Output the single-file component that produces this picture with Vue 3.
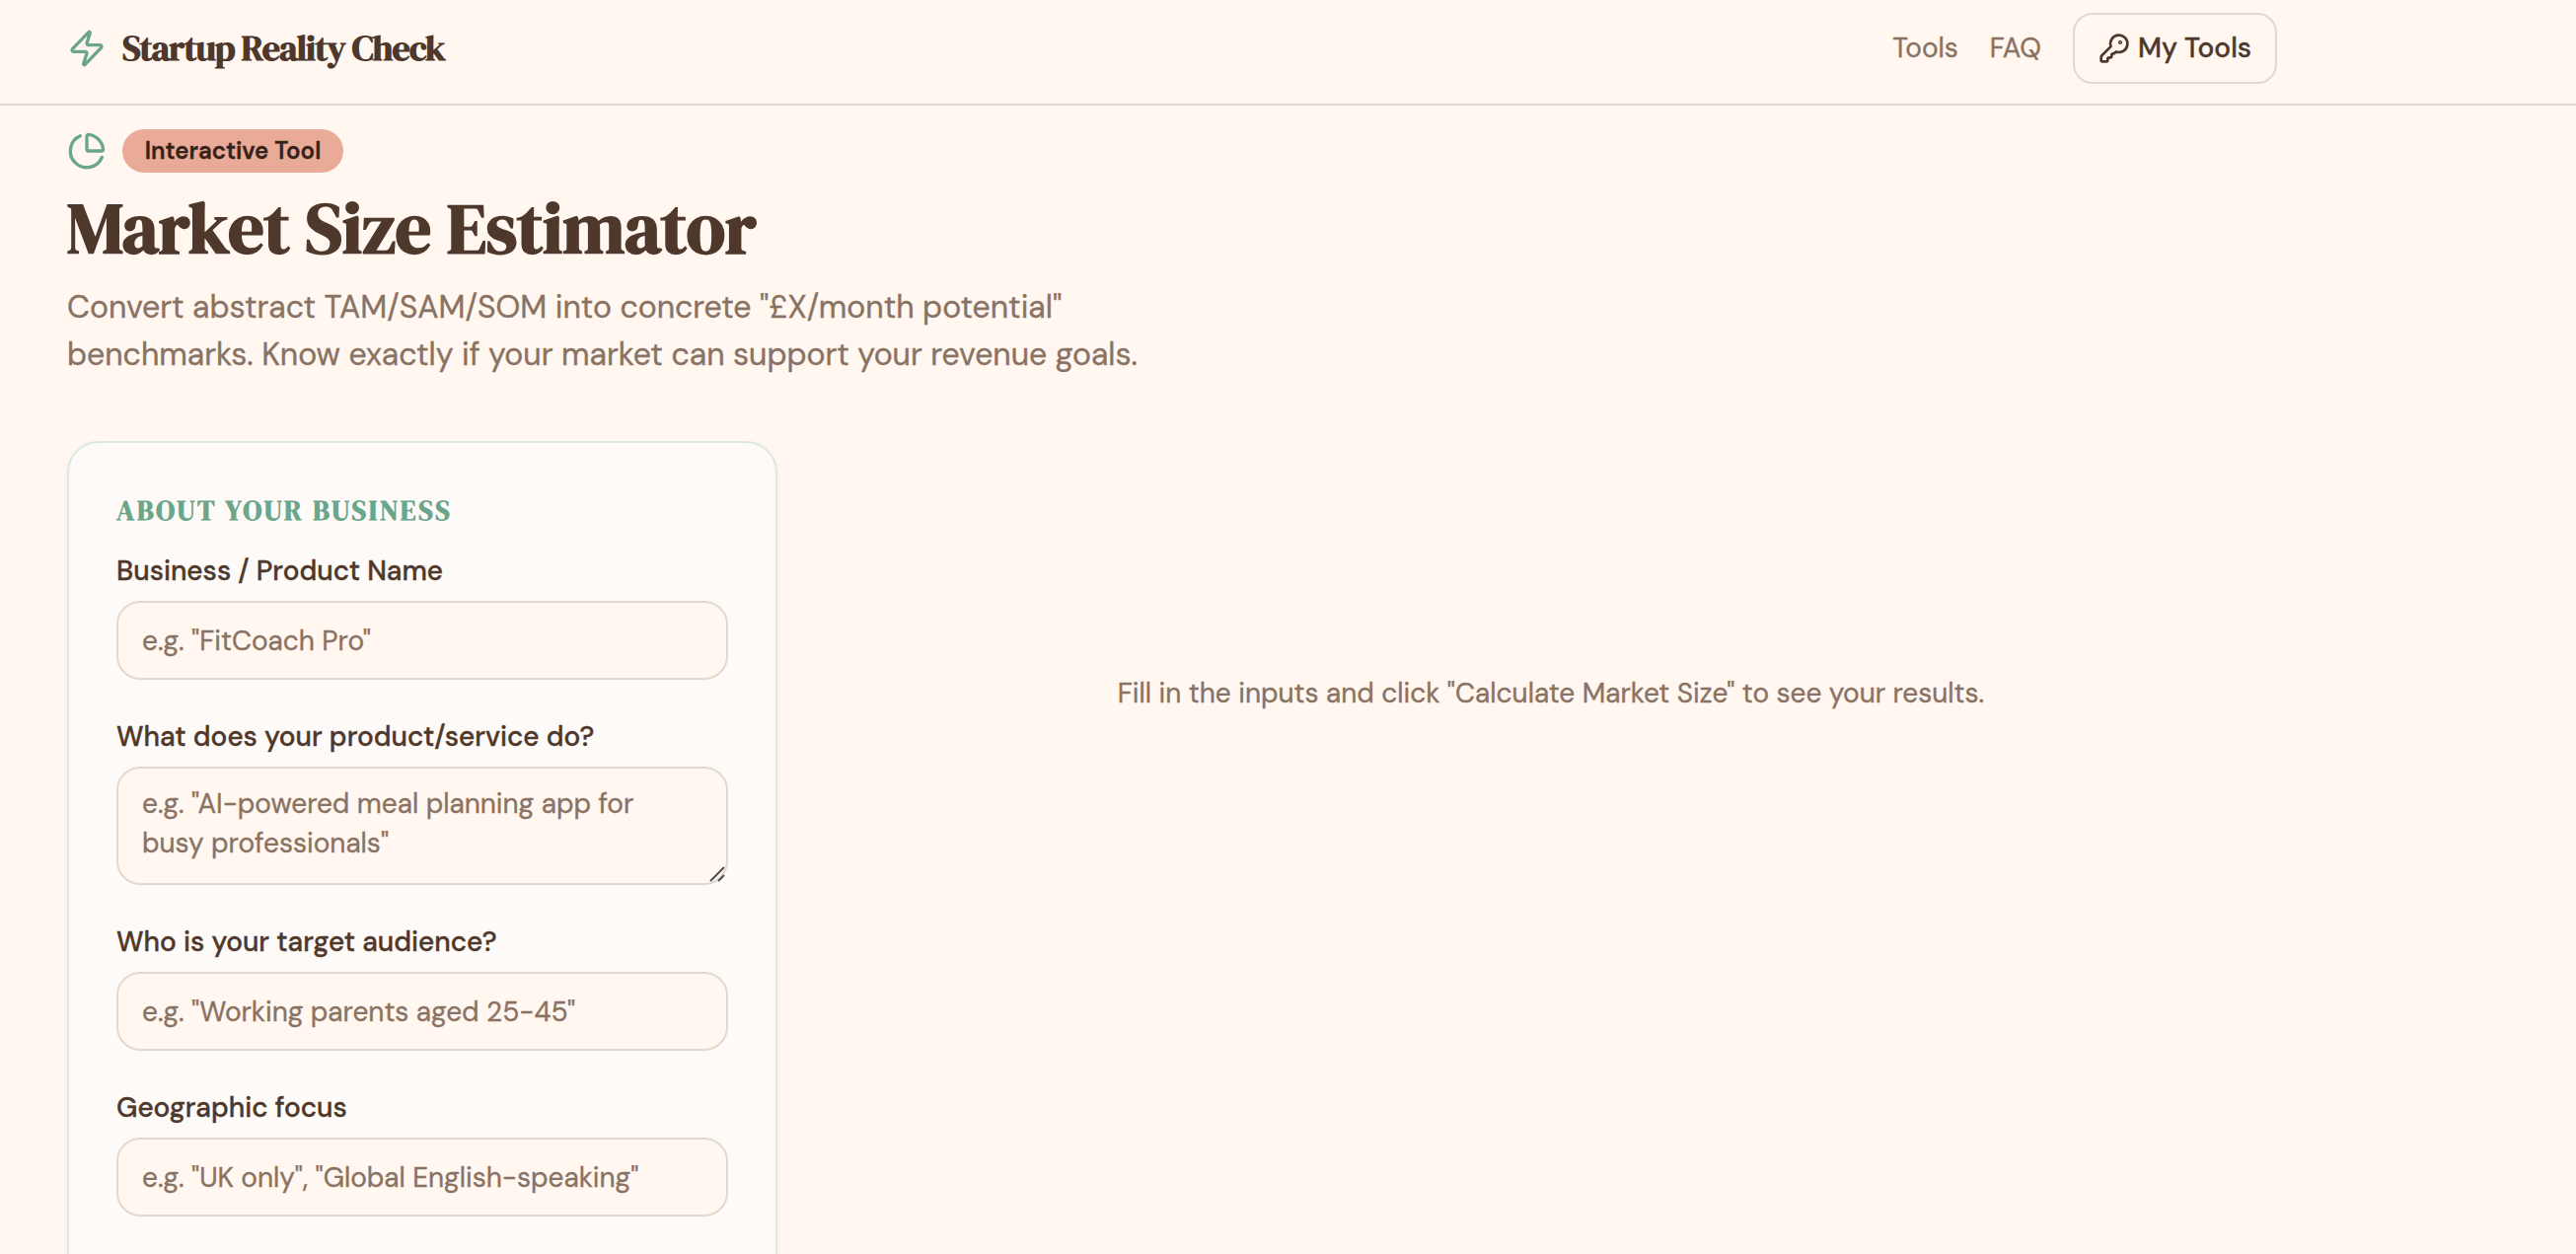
<template>
  <div class="page">
    <header class="header">
      <div class="header-inner">
        <a class="brand">
          <svg class="icon-lg" viewBox="0 0 24 24">
            <path d="M4 14a1 1 0 0 1-.78-1.63l9.9-10.2a.5.5 0 0 1 .86.46l-1.92 6.02A1 1 0 0 0 13 10h7a1 1 0 0 1 .78 1.63l-9.9 10.2a.5.5 0 0 1-.86-.46l1.92-6.02A1 1 0 0 0 11 14z" />
          </svg>
          <span class="brand-name">Startup Reality Check</span>
        </a>
        <nav class="nav">
          <a class="nav-link">Tools</a>
          <a class="nav-link">FAQ</a>
          <button class="my-tools" type="button">
            <svg class="icon-md" viewBox="0 0 24 24">
              <path d="M2.586 17.414A2 2 0 0 0 2 18.828V21a1 1 0 0 0 1 1h3a1 1 0 0 0 1-1v-1a1 1 0 0 1 1-1h1a1 1 0 0 0 1-1v-1a1 1 0 0 1 1-1h.172a2 2 0 0 0 1.414-.586l.814-.814a6.5 6.5 0 1 0-4-4z" />
              <circle cx="16.5" cy="7.5" r=".5" fill="currentColor" />
            </svg>
            <span>My Tools</span>
          </button>
        </nav>
      </div>
    </header>

    <main class="main">
      <div class="tag-row">
        <svg class="icon-lg" viewBox="0 0 24 24">
          <path d="M21 12c.552 0 1.005-.449.95-.998a10 10 0 0 0-8.953-8.951c-.55-.055-.998.398-.998.95v8a1 1 0 0 0 1 1z" />
          <path d="M21.21 15.89A10 10 0 1 1 8 2.83" />
        </svg>
        <span class="badge">Interactive Tool</span>
      </div>
      <h1>Market Size Estimator</h1>
      <p class="intro">
        Convert abstract TAM/SAM/SOM into concrete "£X/month potential"<br />
        benchmarks. Know exactly if your market can support your revenue goals.
      </p>

      <div class="columns">
        <form class="card" @submit.prevent>
          <h3>About your business</h3>
          <div v-for="field in fields" :key="field.id" class="field">
            <label :for="field.id">{{ field.label }}</label>
            <div v-if="field.multiline" class="textarea-wrap">
              <textarea :id="field.id" v-model="form[field.id]" rows="2" :placeholder="field.placeholder"></textarea>
              <svg class="grip" viewBox="0 0 16 16">
                <path d="M1 15 15 1M9 15 15 9" />
              </svg>
            </div>
            <input v-else :id="field.id" v-model="form[field.id]" type="text" :placeholder="field.placeholder" />
          </div>
        </form>

        <section class="results">
          <p>Fill in the inputs and click "Calculate Market Size" to see your results.</p>
        </section>
      </div>
    </main>
  </div>
</template>

<script setup>
import { reactive } from 'vue'

const fields = [
  { id: 'name', label: 'Business / Product Name', placeholder: 'e.g. "FitCoach Pro"' },
  {
    id: 'product',
    label: 'What does your product/service do?',
    placeholder: 'e.g. "AI-powered meal planning app for busy professionals"',
    multiline: true
  },
  { id: 'audience', label: 'Who is your target audience?', placeholder: 'e.g. "Working parents aged 25-45"' },
  { id: 'geo', label: 'Geographic focus', placeholder: 'e.g. "UK only", "Global English-speaking"' }
]

const form = reactive({ name: '', product: '', audience: '', geo: '' })
</script>

<style>
body {
  margin: 0;
  background: #fff7f0;
  overflow: hidden;
}
</style>

<style scoped>
.page {
  height: 1271px;
  overflow: hidden;
  background: #fff7f0;
  color: #4e372b;
  font-family: "DM Sans", Inter, sans-serif;
  font-size: 28px;
  line-height: 40px;
  -webkit-text-stroke-width: 0.35px;
}

.page *,
.page *::before {
  box-sizing: border-box;
}

svg {
  display: block;
  flex: none;
  fill: none;
  stroke: currentColor;
  stroke-width: 2;
  stroke-linecap: round;
  stroke-linejoin: round;
}

.icon-lg {
  width: 40px;
  height: 40px;
  color: #6ba58a;
}

.icon-md {
  width: 32px;
  height: 32px;
}

/* --- Header --- */
.header {
  height: 107px;
  border-bottom: 2px solid #e3d8ce;
}

.header-inner {
  width: 2240px;
  margin-left: 68px;
  padding-top: 13px;
  display: flex;
  align-items: center;
  justify-content: space-between;
}

.brand {
  display: flex;
  align-items: center;
  gap: 16px;
}

.brand-name {
  font-family: "DM Serif Display", "Liberation Serif", serif;
  font-size: 36px;
  font-weight: 700;
  letter-spacing: -0.9px;
  -webkit-text-stroke-width: 0;
}

.nav {
  display: flex;
  align-items: center;
  gap: 32px;
}

.nav-link {
  color: #8a7263;
}

.my-tools {
  display: flex;
  align-items: center;
  gap: 8px;
  height: 72px;
  width: 207px;
  padding: 0 24px;
  border: 2px solid #e3d8ce;
  border-radius: 20px;
  background: none;
  color: #4e372b;
  font: inherit;
  font-weight: 500;
  white-space: nowrap;
}

/* --- Title block --- */
.main {
  padding: 24px 0 0 68px;
}

.tag-row {
  display: flex;
  align-items: center;
  gap: 16px;
  height: 44px;
}

.badge {
  display: flex;
  align-items: center;
  justify-content: center;
  width: 224px;
  height: 44px;
  border-radius: 22px;
  background: #e9aa98;
  color: #35231a;
  font-size: 24px;
  font-weight: 600;
}

h1 {
  margin: 11px 0 0;
  font-family: "DM Serif Display", "Liberation Serif", serif;
  font-size: 72px;
  font-weight: 700;
  line-height: 90px;
  white-space: nowrap;
  -webkit-text-stroke-width: 0;
}

.intro {
  margin: 11px 0 0;
  color: #8a7263;
  font-size: 32px;
  line-height: 48px;
  white-space: nowrap;
}

/* --- Form and results --- */
.columns {
  display: grid;
  grid-template-columns: 720px 1472px;
  gap: 48px;
  align-items: start;
  margin-top: 64px;
}

.card {
  height: 900px;
  padding: 48px;
  border: 2px solid #dde9e0;
  border-radius: 32px;
  background: #fefaf7;
  box-shadow: 0 2px 6px rgba(78, 55, 43, 0.04);
}

h3 {
  margin: 0 0 22px;
  color: #6ba58a;
  font-family: "DM Serif Display", "Liberation Serif", serif;
  font-size: 28px;
  font-weight: 700;
  line-height: 40px;
  letter-spacing: 2.8px;
  text-transform: uppercase;
  -webkit-text-stroke-width: 0;
}

.field {
  margin-bottom: 38px;
}

label {
  display: block;
  margin-bottom: 10px;
  font-weight: 500;
}

input,
textarea {
  display: block;
  width: 100%;
  margin: 0;
  border: 2px solid #e3d8ce;
  border-radius: 24px;
  background: #fff7f0;
  color: #4e372b;
  font: inherit;
  outline: none;
}

input {
  height: 80px;
  padding: 0 24px;
}

textarea {
  height: 120px;
  padding: 16px 24px;
  overflow: hidden;
  resize: none;
}

input::placeholder,
textarea::placeholder {
  color: #8a7263;
  opacity: 1;
}

.textarea-wrap {
  position: relative;
}

.grip {
  position: absolute;
  right: 3px;
  bottom: 3px;
  width: 16px;
  height: 16px;
  color: #4a4a4a;
  stroke-width: 1.8;
  stroke-linecap: butt;
}

.results {
  padding-top: 236px;
  color: #8a7263;
  text-align: center;
}

.results p {
  margin: 0;
}
</style>
